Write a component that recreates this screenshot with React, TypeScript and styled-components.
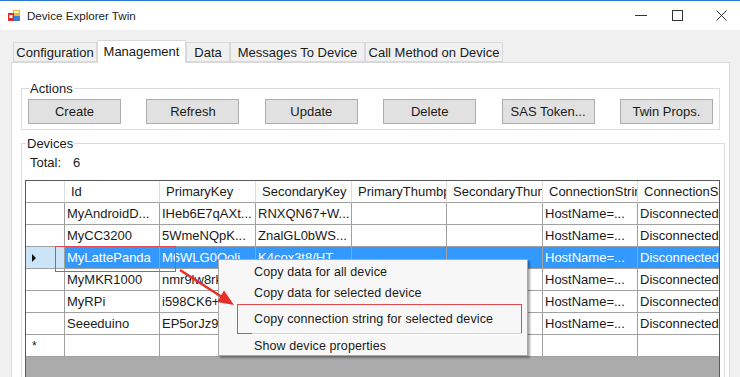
import React from "react";
import styled, { createGlobalStyle } from "styled-components";

const GlobalStyle = createGlobalStyle`
  html, body {
    margin: 0;
    padding: 0;
  }
  body {
    width: 740px;
    height: 377px;
    overflow: hidden;
    background: #f0f0f0;
    font-family: "Liberation Sans", Arial, sans-serif;
    color: #1a1a1a;
  }
`;

const Window = styled.div`
  width: 740px;
  height: 377px;
  box-sizing: border-box;
  border-top: 1px solid #2b78d4;
  display: flex;
  flex-direction: column;
  overflow: hidden;
  background: #f0f0f0;
`;

const TitleBar = styled.div`
  height: 29px;
  flex: none;
  background: #fff;
  display: flex;
  align-items: center;
  padding-left: 8px;
`;

const AppIcon = styled.svg`
  width: 12px;
  height: 12px;
  margin-top: 1px;
  flex: none;
`;

const Title = styled.span`
  margin-left: 7px;
  font-size: 11.6px;
  color: #222;
  flex: 1;
`;

const Caption = styled.svg<{ $gap: number }>`
  width: 12px;
  height: 11px;
  margin-left: ${(p) => p.$gap}px;
  flex: none;
`;

const Body = styled.div`
  flex: 1;
  display: flex;
  flex-direction: column;
  padding: 10px 10px 0 11px;
  min-height: 0;
`;

const TabStrip = styled.div`
  display: flex;
  align-items: flex-end;
  height: 22px;
  padding-left: 2px;
  flex: none;
`;

const Tab = styled.div<{ $w: number; $active?: boolean }>`
  width: ${(p) => p.$w}px;
  box-sizing: border-box;
  height: ${(p) => (p.$active ? 23 : 20)}px;
  margin-bottom: ${(p) => (p.$active ? -1 : 0)}px;
  border: 1px solid #d9d9d9;
  border-bottom: ${(p) => (p.$active ? "none" : "1px solid #d9d9d9")};
  border-left-width: ${(p) => (p.$active ? 1 : 1)}px;
  background: ${(p) => (p.$active ? "#fff" : "#f0f0f0")};
  font-size: 13px;
  color: #1a1a1a;
  display: flex;
  align-items: center;
  justify-content: center;
  position: relative;
  z-index: ${(p) => (p.$active ? 2 : 1)};
  padding-bottom: ${(p) => (p.$active ? 2 : 0)}px;
  white-space: nowrap;
`;

const Panel = styled.div`
  flex: 1;
  background: #fff;
  border: 1px solid #d9d9d9;
  width: 719px;
  box-sizing: border-box;
  padding: 18px 0 0 9px;
  display: flex;
  flex-direction: column;
  position: relative;
  z-index: 1;
`;

const Group = styled.fieldset<{ $w: number }>`
  width: ${(p) => p.$w}px;
  box-sizing: border-box;
  margin: 0;
  border: 1px solid #dcdcdc;
  padding: 3px 6px 5px 6px;
  min-width: 0;
  & + & {
    margin-top: 6px;
  }
`;

const GroupLabel = styled.legend`
  font-size: 13px;
  line-height: 15px;
  padding: 0 1px;
  margin-left: 1px;
  color: #1a1a1a;
`;

const ButtonRow = styled.div`
  display: flex;
  justify-content: space-between;
`;

const ActionButton = styled.button`
  width: 93px;
  height: 25px;
  box-sizing: border-box;
  background: #e1e1e1;
  border: 1px solid #adadad;
  font-family: "Liberation Sans", Arial, sans-serif;
  font-size: 13px;
  color: #1a1a1a;
  padding: 0;
`;

const DevicesGroup = styled(Group)`
  padding: 4px 0 0 3px;
  height: 260px;
`;

const TotalLine = styled.div`
  font-size: 13px;
  line-height: 15px;
  margin-left: 5px;
  display: flex;
  gap: 12px;
`;

const GridWrap = styled.div`
  position: relative;
  margin-top: 10px;
  width: 695px;
  height: 220px;
`;

const Grid = styled.div`
  width: 100%;
  height: 100%;
  box-sizing: border-box;
  border: 1px solid #5a5a5a;
  overflow: hidden;
  display: flex;
  flex-direction: column;
  background: #ababab;
`;

const COLS = "39px 95px 96px 96px 95px 96px 95px 95px";

const Row = styled.div`
  display: grid;
  grid-template-columns: ${COLS};
  height: 22px;
  flex: none;
  background: #fff;
`;

const HeaderCell = styled.div`
  box-sizing: border-box;
  border-right: 1px solid #dcdcdc;
  border-bottom: 1px solid #a0a0a0;
  padding-left: 6px;
  font-size: 13px;
  line-height: 21px;
  white-space: nowrap;
  overflow: hidden;
`;

const RowHead = styled.div<{ $sel?: boolean }>`
  box-sizing: border-box;
  border-right: 1px solid #a0a0a0;
  border-bottom: 1px solid #a0a0a0;
  background: ${(p) => (p.$sel ? "#cce4f7" : "#fff")};
  display: flex;
  align-items: center;
  padding-left: 6px;
  font-size: 12px;
`;

const Arrow = styled.span`
  width: 0;
  height: 0;
  border-top: 4px solid transparent;
  border-bottom: 4px solid transparent;
  border-left: 4px solid #111;
`;

const Cell = styled.div<{ $sel?: boolean }>`
  box-sizing: border-box;
  border-right: 1px solid #a0a0a0;
  border-bottom: 1px solid #a0a0a0;
  background: ${(p) => (p.$sel ? "#3399ff" : "#fff")};
  color: ${(p) => (p.$sel ? "#fff" : "#1a1a1a")};
  padding-left: 2px;
  font-size: 13px;
  line-height: 21px;
  white-space: nowrap;
  overflow: hidden;
`;

const Mark = styled.div`
  position: absolute;
  left: 30px;
  top: 66px;
  width: 121px;
  height: 26px;
  box-sizing: border-box;
  border: 1px solid #e5484d;
  pointer-events: none;
`;

const Pointer = styled.svg`
  position: absolute;
  left: 0;
  top: 0;
  width: 260px;
  height: 150px;
  pointer-events: none;
  z-index: 4;
`;

const Menu = styled.div`
  position: absolute;
  left: 193px;
  top: 79px;
  width: 310px;
  height: 97px;
  box-sizing: border-box;
  background: #f7f7f7;
  border: 1px solid #a9a9a9;
  box-shadow: 2px 2px 2px rgba(0, 0, 0, 0.35);
  padding-top: 2px;
  z-index: 3;
`;

const MenuItem = styled.div<{ $marked?: boolean }>`
  height: 21px;
  line-height: 21px;
  padding-left: 35px;
  font-size: 12.5px;
  letter-spacing: 0.1px;
  color: #1a1a1a;
  position: relative;
  white-space: nowrap;

  ${(p) =>
    p.$marked &&
    `
    &::after {
      content: "";
      position: absolute;
      left: 18px;
      right: 5px;
      top: -5px;
      bottom: -4px;
      border: 1px solid #e5484d;
    }
  `}
`;

const MenuGap = styled.div<{ $h: number; $line?: boolean }>`
  height: ${(p) => p.$h}px;
  position: relative;
  margin-left: 33px;
  margin-right: 5px;
  ${(p) =>
    p.$line &&
    `
    &::before {
      content: "";
      position: absolute;
      left: 0;
      right: 0;
      top: 3px;
      border-top: 1px solid #d0d0d0;
      border-bottom: 1px solid #fff;
    }
  `}
`;

const headers = [
  "Id",
  "PrimaryKey",
  "SecondaryKey",
  "PrimaryThumbprint",
  "SecondaryThumbprint",
  "ConnectionString",
  "ConnectionState",
];

const devices = [
  ["MyAndroidD...", "IHeb6E7qAXt...", "RNXQN67+W..."],
  ["MyCC3200", "5WmeNQpK...", "ZnalGL0bWS..."],
  ["MyLattePanda", "M6WLG0Qoli...", "K4cox3t8/HT..."],
  ["MyMKR1000", "nmr9lw8rk...", "Hq0pLs2+..."],
  ["MyRPi", "i598CK6+...", "Tg8vWnQ1..."],
  ["Seeeduino", "EP5orJz9r...", "bX2mKa7P..."],
];

const SELECTED = 2;

export default function App() {
  return (
    <>
      <GlobalStyle />
      <Window>
        <TitleBar>
          <AppIcon viewBox="0 0 12 12">
            <rect x="5" y="0" width="7" height="6" fill="#f2b630" />
            <rect x="6" y="1" width="5" height="2" fill="#fff3c4" />
            <rect x="5" y="6" width="7" height="5" fill="#3d7fd6" />
            <rect x="0" y="3" width="6" height="8" fill="#d9302c" />
            <rect x="1.5" y="5" width="3" height="3" fill="#fff" />
          </AppIcon>
          <Title>Device Explorer Twin</Title>
          <Caption $gap={0} viewBox="0 0 12 11">
            <line x1="0" y1="5.5" x2="12" y2="5.5" stroke="#333" strokeWidth="1" />
          </Caption>
          <Caption $gap={25} viewBox="0 0 12 11">
            <rect x="0.5" y="0.5" width="10" height="10" fill="none" stroke="#333" strokeWidth="1" />
          </Caption>
          <Caption $gap={32} viewBox="0 0 12 11" style={{ marginRight: 12 }}>
            <path d="M0.5 0.5 L10.5 10.5 M10.5 0.5 L0.5 10.5" stroke="#333" strokeWidth="1" />
          </Caption>
        </TitleBar>
        <Body>
          <TabStrip>
            <Tab $w={84}>Configuration</Tab>
            <Tab $w={89} $active>
              Management
            </Tab>
            <Tab $w={44}>Data</Tab>
            <Tab $w={135}>Messages To Device</Tab>
            <Tab $w={138}>Call Method on Device</Tab>
          </TabStrip>
          <Panel>
            <Group $w={699}>
              <GroupLabel>Actions</GroupLabel>
              <ButtonRow>
                <ActionButton>Create</ActionButton>
                <ActionButton>Refresh</ActionButton>
                <ActionButton>Update</ActionButton>
                <ActionButton>Delete</ActionButton>
                <ActionButton>SAS Token...</ActionButton>
                <ActionButton>Twin Props.</ActionButton>
              </ButtonRow>
            </Group>
            <DevicesGroup $w={704}>
              <GroupLabel>Devices</GroupLabel>
              <TotalLine>
                <span>Total:</span>
                <span>6</span>
              </TotalLine>
              <GridWrap>
                <Grid>
                  <Row>
                    <HeaderCell />
                    {headers.map((h) => (
                      <HeaderCell key={h}>{h}</HeaderCell>
                    ))}
                  </Row>
                  {devices.map((d, i) => {
                    const sel = i === SELECTED;
                    return (
                      <Row key={d[0]}>
                        <RowHead $sel={sel}>{sel && <Arrow />}</RowHead>
                        <Cell $sel={sel}>{d[0]}</Cell>
                        <Cell $sel={sel}>{d[1]}</Cell>
                        <Cell $sel={sel}>{d[2]}</Cell>
                        <Cell $sel={sel} />
                        <Cell $sel={sel} />
                        <Cell $sel={sel}>HostName=...</Cell>
                        <Cell $sel={sel}>Disconnected</Cell>
                      </Row>
                    );
                  })}
                  <Row>
                    <RowHead>*</RowHead>
                    <Cell />
                    <Cell />
                    <Cell />
                    <Cell />
                    <Cell />
                    <Cell />
                    <Cell />
                  </Row>
                </Grid>
                <Mark />
                <Menu>
                  <MenuItem>Copy data for all device</MenuItem>
                  <MenuItem>Copy data for selected device</MenuItem>
                  <MenuGap $h={5} />
                  <MenuItem $marked>Copy connection string for selected device</MenuItem>
                  <MenuGap $h={6} $line />
                  <MenuItem>Show device properties</MenuItem>
                </Menu>
                <Pointer viewBox="0 0 260 150">
                  <line x1="155" y1="90" x2="196" y2="116.5" stroke="#e8302a" strokeWidth="2.6" />
                  <polygon points="209,125 192,122 199,110.5" fill="#e8302a" />
                </Pointer>
              </GridWrap>
            </DevicesGroup>
          </Panel>
        </Body>
      </Window>
    </>
  );
}
